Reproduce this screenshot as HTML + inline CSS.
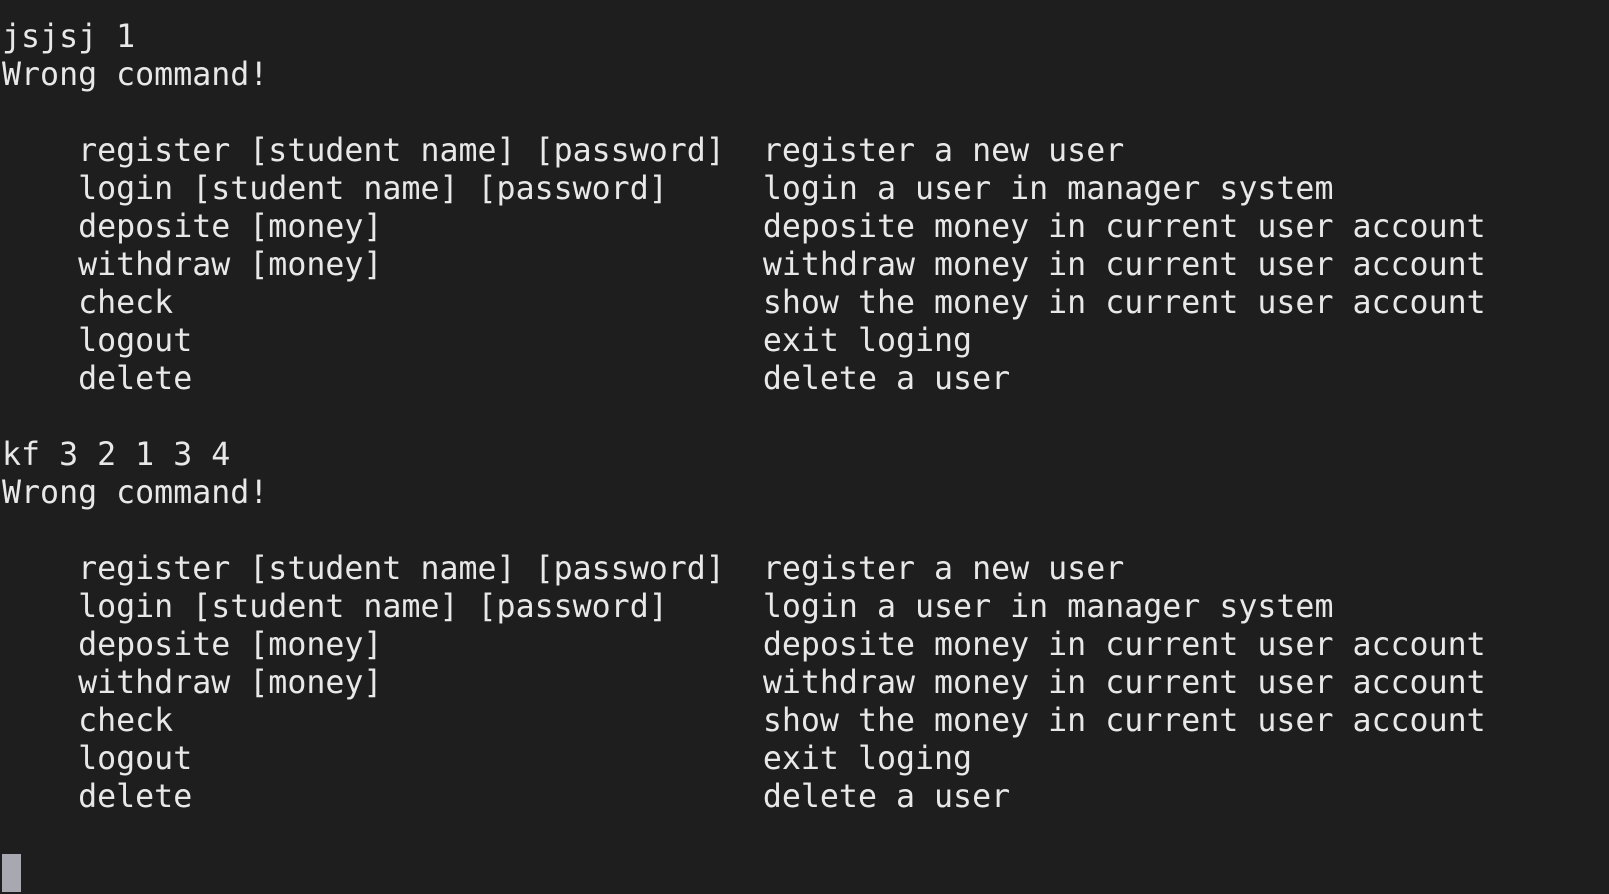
<!DOCTYPE html>
<html><head><meta charset="utf-8"><style>
html,body{margin:0;padding:0;background:#1e1e1e;width:1609px;height:894px;overflow:hidden}
pre{margin:0;position:absolute;left:2px;top:18px;font-family:"DejaVu Sans Mono","Liberation Mono",monospace;font-size:31.6px;line-height:38px;color:#e8e8e8;white-space:pre}
.cur{position:absolute;left:2px;top:854px;width:19px;height:38px;background:#a8a8b0}
</style></head><body>
<pre>jsjsj 1
Wrong command!

    register [student name] [password]  register a new user
    login [student name] [password]     login a user in manager system
    deposite [money]                    deposite money in current user account
    withdraw [money]                    withdraw money in current user account
    check                               show the money in current user account
    logout                              exit loging
    delete                              delete a user

kf 3 2 1 3 4
Wrong command!

    register [student name] [password]  register a new user
    login [student name] [password]     login a user in manager system
    deposite [money]                    deposite money in current user account
    withdraw [money]                    withdraw money in current user account
    check                               show the money in current user account
    logout                              exit loging
    delete                              delete a user
</pre>
<div class="cur"></div>
</body></html>
